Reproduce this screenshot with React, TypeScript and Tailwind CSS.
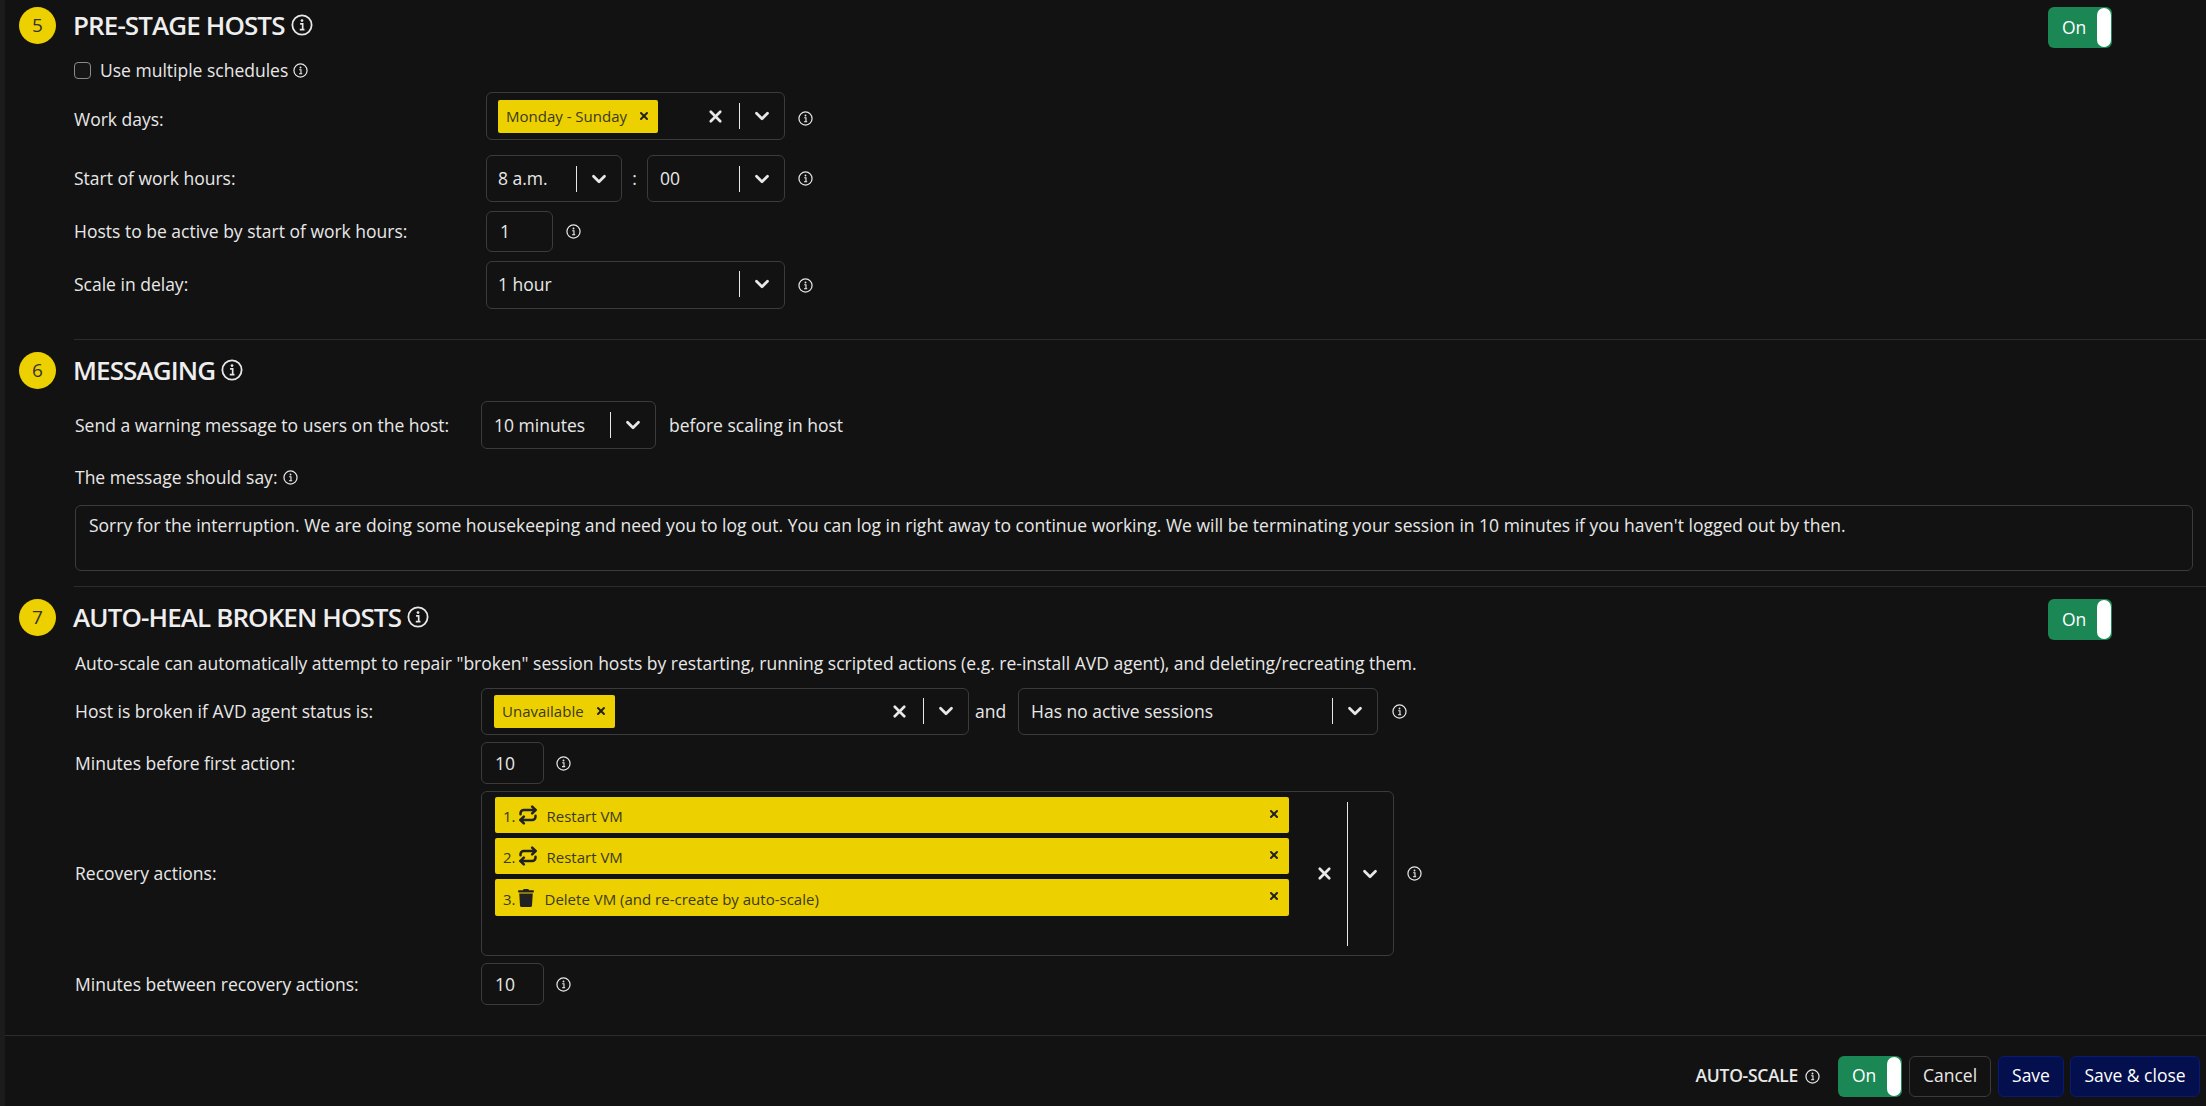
import { ChevronDown, Repeat, X } from "lucide-react";
import { FaTrash } from "react-icons/fa";
import type { ReactNode } from "react";

const InfoIcon = ({ size = 15 }: { size?: number }) => (
  <svg width={size} height={size} viewBox="0 0 16 16" fill="none" className="shrink-0 text-[#e8e8e8]">
    <circle cx="8" cy="8" r="7" stroke="currentColor" strokeWidth="1.3" />
    <circle cx="8" cy="4.8" r="1" fill="currentColor" />
    <path d="M6.6 7.2H8.5V11.2M6.4 11.4H9.8" stroke="currentColor" strokeWidth="1.2" />
  </svg>
);

const Caret = () => (
  <span className="flex w-[44px] shrink-0 items-center justify-center">
    <ChevronDown size={22} strokeWidth={3} className="text-[#e8e8e8]" />
  </span>
);

const Clear = () => <X size={19} strokeWidth={3.4} className="shrink-0 text-[#e8e8e8]" />;

const Sep = ({ h = "h-[26px]" }: { h?: string }) => <span className={`block w-px shrink-0 bg-[#e8e8e8] ${h}`} />;

const Chip = ({ children }: { children: ReactNode }) => (
  <span className="flex h-[33px] items-center rounded-[2px] bg-[#edd000] pl-2 pr-[8px] text-[15px] text-[#3a3a20]">
    {children}
    <X size={12} strokeWidth={4} className="ml-[11px] text-[#222]" />
  </span>
);

const Select = ({ w, h, children }: { w: string; h: string; children: ReactNode }) => (
  <div className={`flex items-center rounded-[6px] border border-[#3b3b3b] ${w} ${h}`}>{children}</div>
);

const NumberBox = ({ w, h, value }: { w: string; h: string; value: string }) => (
  <div className={`flex items-center rounded-[6px] border border-[#3b3b3b] pl-[13px] ${w} ${h}`}>{value}</div>
);

const Toggle = ({ pb = "" }: { pb?: string }) => (
  <div className="flex h-[41px] w-[64px] items-center justify-between rounded-[6px] bg-[#1b8755] pl-[14px] pr-px text-white">
    <span className={pb}>On</span>
    <span className="h-[39px] w-[14px] rounded-[7px] bg-white" />
  </div>
);

const Header = ({ n, title, toggle }: { n: string; title: string; toggle?: boolean }) => (
  <div className="flex h-[37px] items-start">
    <div className="ml-[14px] flex h-[37px] w-[37px] shrink-0 items-center justify-center rounded-full bg-[#edd000] text-[19px] text-[#333]">
      {n}
    </div>
    <div className="ml-[17px] flex h-[36px] items-center gap-[6px]">
      <h2 className="text-[26px] font-semibold tracking-[-0.9px] text-[#eeeeee]">{title}</h2>
      <InfoIcon size={22} />
    </div>
    {toggle && (
      <div className="ml-auto mr-[94px]">
        <Toggle />
      </div>
    )}
  </div>
);

const ActionChip = ({ n, label, icon, h }: { n: string; label: string; icon: ReactNode; h: string }) => (
  <div className={`flex w-[794px] items-center rounded-[2px] bg-[#edd000] pl-2 pr-[9px] text-[15px] text-[#3a3a20] ${h}`}>
    <span className="pt-[3px]">{n}</span>
    {icon}
    <span className="pt-[3px]">{label}</span>
    <X size={12} strokeWidth={4} className="ml-auto -mt-[3px] text-[#222]" />
  </div>
);

export default function App() {
  return (
    <div className="flex h-[1106px] w-[2206px] flex-col overflow-hidden border-l-[5px] border-[#1c1c1c] bg-[#121212] pt-[7px] font-['Open_Sans',sans-serif] text-[17.5px] text-[#e8e8e8]">
      <Header n="5" title="PRE-STAGE HOSTS" toggle />

      <div className="ml-[69px] mt-[14px] flex h-[24px] items-center">
        <span className="h-[17px] w-[17px] rounded-[4px] border border-[#8a8a8a] bg-[#161616]" />
        <span className="ml-[9px]">Use multiple schedules</span>
        <span className="ml-[5px]"><InfoIcon /></span>
      </div>

      <div className="ml-[69px] mt-[10px] flex h-[48px] items-center">
        <span className="w-[412px] shrink-0 pt-[6px]">Work days:</span>
        <Select w="w-[299px] pl-[11px]" h="h-[48px]">
          <Chip>Monday - Sunday</Chip>
          <span className="ml-auto mr-[14px]"><Clear /></span>
          <Sep />
          <Caret />
        </Select>
        <span className="ml-[13px] pt-[5px]"><InfoIcon /></span>
      </div>

      <div className="ml-[69px] mt-[15px] flex h-[47px] items-center">
        <span className="w-[412px] shrink-0">Start of work hours:</span>
        <Select w="w-[136px] pl-[11px]" h="h-[47px]">
          8 a.m.
          <span className="ml-auto"><Sep /></span>
          <Caret />
        </Select>
        <span className="w-[25px] text-center">:</span>
        <Select w="w-[138px] pl-3" h="h-[47px]">
          00
          <span className="ml-auto"><Sep /></span>
          <Caret />
        </Select>
        <span className="ml-[13px]"><InfoIcon /></span>
      </div>

      <div className="ml-[69px] mt-[9px] flex h-[41px] items-center">
        <span className="w-[412px] shrink-0">Hosts to be active by start of work hours:</span>
        <NumberBox w="w-[67px]" h="h-[41px]" value="1" />
        <span className="ml-[13px]"><InfoIcon /></span>
      </div>

      <div className="ml-[69px] mt-[9px] flex h-[48px] items-center">
        <span className="w-[412px] shrink-0 pb-[2px]">Scale in delay:</span>
        <Select w="w-[299px] pl-[11px]" h="h-[48px] pb-[2px]">
          1 hour
          <span className="ml-auto"><Sep /></span>
          <Caret />
        </Select>
        <span className="ml-[13px]"><InfoIcon /></span>
      </div>

      <div className="ml-[69px] mt-[30px] h-px shrink-0 bg-[#2c2c2c]" />

      <div className="mt-[12px]">
        <Header n="6" title="MESSAGING" />
      </div>

      <div className="ml-[70px] mt-[12px] flex h-[48px] items-center">
        <span className="w-[406px] shrink-0">Send a warning message to users on the host:</span>
        <Select w="w-[175px] pl-3" h="h-[48px]">
          10 minutes
          <span className="ml-auto"><Sep /></span>
          <Caret />
        </Select>
        <span className="ml-[13px]">before scaling in host</span>
      </div>

      <div className="ml-[70px] mt-[16px] flex h-[24px] items-center gap-[6px]">
        The message should say:
        <InfoIcon />
      </div>

      <div className="ml-[70px] mr-[13px] mt-[16px] h-[66px] shrink-0 rounded-[6px] border border-[#3b3b3b] px-[13px] pt-[6px]">
        Sorry for the interruption. We are doing some housekeeping and need you to log out. You can log in right away to continue working. We will be terminating your session in 10 minutes if you haven't logged out by then.
      </div>

      <div className="ml-[69px] mt-[15px] h-px shrink-0 bg-[#2c2c2c]" />

      <div className="mt-[12px]">
        <Header n="7" title="AUTO-HEAL BROKEN HOSTS" toggle />
      </div>

      <div className="ml-[70px] mt-[14px] h-[24px]">
        Auto-scale can automatically attempt to repair "broken" session hosts by restarting, running scripted actions (e.g. re-install AVD agent), and deleting/recreating them.
      </div>

      <div className="ml-[70px] mt-[13px] flex h-[48px] items-center">
        <span className="w-[406px] shrink-0">Host is broken if AVD agent status is:</span>
        <Select w="w-[488px] pl-3" h="h-[47px]">
          <Chip>Unavailable</Chip>
          <span className="ml-auto mr-[14px]"><Clear /></span>
          <Sep />
          <Caret />
        </Select>
        <span className="ml-[6px] w-[43px]">and</span>
        <Select w="w-[360px] pl-3" h="h-[47px]">
          Has no active sessions
          <span className="ml-auto"><Sep /></span>
          <Caret />
        </Select>
        <span className="ml-[14px]"><InfoIcon /></span>
      </div>

      <div className="ml-[70px] mt-[7px] flex h-[42px] items-center">
        <span className="w-[406px] shrink-0">Minutes before first action:</span>
        <NumberBox w="w-[63px]" h="h-[42px]" value="10" />
        <span className="ml-[12px]"><InfoIcon /></span>
      </div>

      <div className="ml-[70px] mt-[7px] flex h-[165px] items-center">
        <span className="w-[406px] shrink-0">Recovery actions:</span>
        <div className="flex h-[165px] w-[913px] items-center rounded-[6px] border border-[#3b3b3b] pl-[13px]">
          <div className="flex h-full w-[794px] shrink-0 flex-col gap-[5px] pt-[5px]">
            <ActionChip n="1." label="Restart VM" h="h-[36px]" icon={<Repeat size={20} strokeWidth={3} className="ml-[2px] mr-[9px] text-[#222]" />} />
            <ActionChip n="2." label="Restart VM" h="h-[36px]" icon={<Repeat size={20} strokeWidth={3} className="ml-[2px] mr-[9px] text-[#222]" />} />
            <ActionChip n="3." label="Delete VM (and re-create by auto-scale)" h="h-[37px]" icon={<FaTrash size={18} className="ml-[1px] mr-[10px] text-[#222]" />} />
          </div>
          <span className="ml-[26px] mr-[13px]"><Clear /></span>
          <Sep h="h-[144px]" />
          <Caret />
        </div>
        <span className="ml-[13px]"><InfoIcon /></span>
      </div>

      <div className="ml-[70px] mt-[7px] flex h-[42px] items-center">
        <span className="w-[406px] shrink-0">Minutes between recovery actions:</span>
        <NumberBox w="w-[63px]" h="h-[42px]" value="10" />
        <span className="ml-[12px]"><InfoIcon /></span>
      </div>

      <div className="mt-[30px] h-px shrink-0 bg-[#2c2c2c]" />

      <div className="mt-[19px] flex h-[42px] items-center justify-end pr-[6px]">
        <span className="pb-[2px] font-semibold tracking-[-0.3px]">AUTO-SCALE</span>
        <span className="ml-[7px] mr-[18px]"><InfoIcon /></span>
        <Toggle pb="pb-[2px]" />
        <button className="ml-[7px] h-[41px] w-[82px] rounded-[6px] border border-[#3b3b3b] pb-[2px]">Cancel</button>
        <button className="ml-[7px] h-[41px] w-[66px] rounded-[6px] border border-[#0a1a70] bg-[#040f4e] pb-[2px] text-white">Save</button>
        <button className="ml-[6px] h-[41px] w-[130px] rounded-[6px] border border-[#0a1a70] bg-[#040f4e] pb-[2px] text-white">Save &amp; close</button>
      </div>
    </div>
  );
}
